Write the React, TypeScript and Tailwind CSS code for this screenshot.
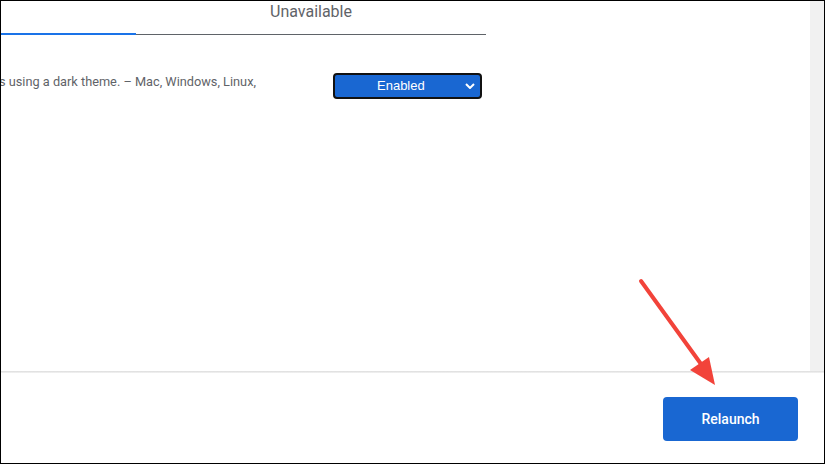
import React from 'react';

const Arrow: React.FC = () => (
  <svg className="pointer-events-none absolute inset-0" width="825" height="464" viewBox="0 0 825 464">
    <line x1="640" y1="280" x2="700" y2="363" stroke="#f2433a" strokeWidth="4" strokeLinecap="round" />
    <polygon points="714,384 689,369 708,356" fill="#f2433a" />
  </svg>
);

const App: React.FC = () => {
  return (
    <div className="relative flex h-[464px] w-[825px] flex-col overflow-hidden border border-black bg-white font-['Roboto',sans-serif]">
      <div className="flex h-[370px]">
        <div className="flex-1 overflow-hidden">
          {/* tabs */}
          <div className="flex h-[34px] w-[485px]">
            <div className="w-[135px] border-b-2 border-[#1a73e8]" />
            <div className="flex-1 border-b border-[#5f6368] pt-[1px] text-center text-[16px] leading-[20px] text-[#5f6368]">
              Unavailable
            </div>
          </div>
          {/* experiment row */}
          <div className="flex w-[485px] items-start pt-[37px]">
            <p className="ml-[-2px] w-[290px] whitespace-nowrap text-[12.75px] leading-[20px] text-[#5f6368]">
              s using a dark theme. – Mac, Windows, Linux,
            </p>
            <div className="ml-[44px] mt-[1px] flex h-[26px] w-[149px] items-center rounded-[4px] border-2 border-[#111] bg-[#1967d2] pr-[5px] font-['Liberation_Sans',sans-serif] text-[13px] text-white">
              <span className="ml-[42px]">Enabled</span>
              <span className="flex-1" />
              <svg width="10" height="6" viewBox="0 0 10 6" fill="none">
                <path d="M1 1l4 4 4-4" stroke="white" strokeWidth="2" />
              </svg>
            </div>
          </div>
        </div>
        <div className="w-[14px] bg-[#f1f1f1]" />
      </div>
      <div className="h-[2px] bg-gradient-to-b from-[#dcdcdc] to-[#f3f3f3]" />
      <div className="flex flex-1 justify-end pr-[26px] pt-[24px]">
        <button className="h-[44px] w-[135px] rounded-[4px] bg-[#1967d2] text-[14px] font-medium text-white">
          Relaunch
        </button>
      </div>
      <Arrow />
    </div>
  );
};

export default App;
